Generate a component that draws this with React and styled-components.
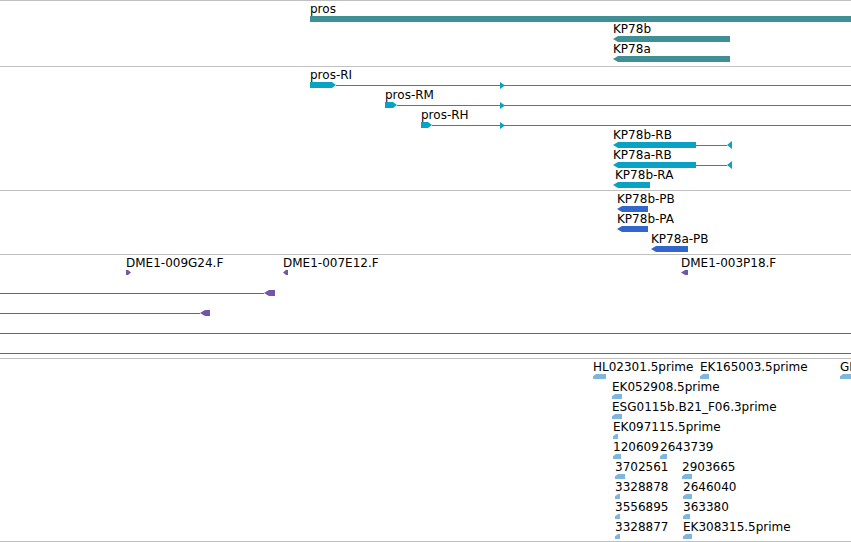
import styled, { createGlobalStyle } from "styled-components";

const GlobalStyle = createGlobalStyle`
  html, body {
    margin: 0;
    padding: 0;
    background: #ffffff;
  }
  body {
    font-family: "DejaVu Sans", Verdana, sans-serif;
  }
`;

const ROW = 20;

const COLORS = {
  gene: "#408f94",
  transcript: "#0aa2c4",
  transcriptLine: "#1a8fae",
  protein: "#3366cc",
  clone: "#7356a6",
  est: "#7fb6dd",
};

const SHAPES = {
  flat: "none",
  left: "polygon(0 50%, 5px 0, 100% 0, 100% 100%, 5px 100%)",
  right: "polygon(0 0, calc(100% - 4px) 0, 100% 50%, calc(100% - 4px) 100%, 0 100%)",
  est: "polygon(0 45%, 3px 0, 100% 0, 100% 100%, 0 100%)",
  triLeft: "polygon(0 50%, 100% 0, 100% 100%)",
  triRight: "polygon(0 0, 100% 50%, 0 100%)",
  flagLeft: "polygon(0 50%, 60% 0, 100% 0, 100% 100%, 60% 100%)",
  flagRight: "polygon(0 0, 40% 0, 100% 50%, 40% 100%, 0 100%)",
};

const Browser = styled.div`
  width: 851px;
  overflow: hidden;
  display: flex;
  flex-direction: column;
`;

const Track = styled.section`
  position: relative;
  height: ${(p) => p.$height}px;
  border-top: 1px solid #c0c0c0;
  overflow: hidden;

  &:last-child {
    border-bottom: 1px solid #c0c0c0;
  }
`;

const Feature = styled.div`
  position: absolute;
  left: ${(p) => p.$x}px;
  top: ${(p) => 1 + p.$row * ROW}px;
  display: flex;
  flex-direction: column;
  align-items: flex-start;
`;

const Label = styled.span`
  display: block;
  height: 14px;
  margin-left: ${(p) => p.$dx || 0}px;
  font-size: 12px;
  line-height: 14px;
  color: #000000;
  white-space: nowrap;
`;

const Glyph = styled.div`
  position: relative;
  display: flex;
  align-items: flex-start;
  height: 7px;
`;

const Block = styled.div`
  flex: none;
  width: ${(p) => p.$w}px;
  height: ${(p) => p.$h}px;
  background: ${(p) => p.$color};
  clip-path: ${(p) => SHAPES[p.$shape]};
`;

const Intron = styled.div`
  flex: none;
  width: ${(p) => p.$w}px;
  height: 1px;
  margin-top: 3px;
  background: ${(p) => p.$color};
`;

const Marker = styled.div`
  position: absolute;
  left: ${(p) => p.$x}px;
  top: ${(p) => p.$top}px;
  width: 5px;
  height: ${(p) => p.$h}px;
  background: ${(p) => p.$color};
  clip-path: ${(p) => SHAPES[p.$shape]};
`;

const tracks = [
  {
    id: "genes",
    height: 65,
    color: COLORS.gene,
    features: [
      { row: 0, x: 310, label: "pros", parts: [{ w: 541 }] },
      { row: 1, x: 613, label: "KP78b", parts: [{ w: 117, shape: "left" }] },
      { row: 2, x: 613, label: "KP78a", parts: [{ w: 117, shape: "left" }] },
    ],
  },
  {
    id: "transcripts",
    height: 123,
    color: COLORS.transcript,
    line: COLORS.transcriptLine,
    features: [
      {
        row: 0, x: 310, label: "pros-RI",
        parts: [{ w: 26, shape: "right" }, { w: 515, line: true }],
        markers: [{ x: 190, top: 0, h: 7, shape: "triRight" }],
      },
      {
        row: 1, x: 385, label: "pros-RM",
        parts: [{ w: 12, shape: "right" }, { w: 454, line: true }],
        markers: [{ x: 115, top: 0, h: 7, shape: "triRight" }],
      },
      {
        row: 2, x: 421, label: "pros-RH",
        parts: [{ w: 11, shape: "right" }, { w: 419, line: true }],
        markers: [{ x: 79, top: 0, h: 7, shape: "triRight" }],
      },
      {
        row: 3, x: 613, label: "KP78b-RB",
        parts: [{ w: 83, shape: "left" }, { w: 31, line: true }],
        markers: [{ x: 114, top: -1, h: 8, shape: "triLeft" }],
      },
      {
        row: 4, x: 613, label: "KP78a-RB",
        parts: [{ w: 83, shape: "left" }, { w: 31, line: true }],
        markers: [{ x: 114, top: -1, h: 8, shape: "triLeft" }],
      },
      { row: 5, x: 613, label: "KP78b-RA", dx: 2, parts: [{ w: 37, shape: "left" }] },
    ],
  },
  {
    id: "proteins",
    height: 63,
    color: COLORS.protein,
    features: [
      { row: 0, x: 617, label: "KP78b-PB", parts: [{ w: 31, shape: "left" }] },
      { row: 1, x: 617, label: "KP78b-PA", parts: [{ w: 31, shape: "left" }] },
      { row: 2, x: 651, label: "KP78a-PB", parts: [{ w: 37, shape: "left" }] },
    ],
  },
  {
    id: "clones",
    height: 103,
    color: COLORS.clone,
    features: [
      { row: 0, x: 126, label: "DME1-009G24.F", parts: [{ w: 5, h: 5, shape: "flagRight" }] },
      { row: 0, x: 283, label: "DME1-007E12.F", parts: [{ w: 5, h: 5, shape: "flagLeft" }] },
      { row: 0, x: 681, label: "DME1-003P18.F", parts: [{ w: 7, h: 5, shape: "flagLeft" }] },
      { row: 1, x: 0, parts: [{ w: 264, line: true }, { w: 11, shape: "left" }] },
      { row: 2, x: 0, parts: [{ w: 200, line: true }, { w: 10, shape: "left" }] },
      { row: 3, x: 0, parts: [{ w: 851, line: true }] },
      { row: 4, x: 0, parts: [{ w: 851, line: true }] },
    ],
  },
  {
    id: "ests",
    height: 182,
    color: COLORS.est,
    features: [
      { row: 0, x: 593, label: "HL02301.5prime", est: 13 },
      { row: 0, x: 700, label: "EK165003.5prime", est: 9 },
      { row: 0, x: 840, label: "GH01001.5prime", est: 11 },
      { row: 1, x: 612, label: "EK052908.5prime", est: 10 },
      { row: 2, x: 612, label: "ESG0115b.B21_F06.3prime", est: 10 },
      { row: 3, x: 613, label: "EK097115.5prime", est: 5 },
      { row: 4, x: 613, label: "120609", est: 8 },
      { row: 4, x: 660, label: "2643739", est: 7 },
      { row: 5, x: 615, label: "3702561", est: 10 },
      { row: 5, x: 682, label: "2903665", est: 10 },
      { row: 6, x: 615, label: "3328878", est: 5 },
      { row: 6, x: 683, label: "2646040", est: 9 },
      { row: 7, x: 615, label: "3556895", est: 5 },
      { row: 7, x: 683, label: "363380", est: 7 },
      { row: 8, x: 615, label: "3328877", est: 5 },
      { row: 8, x: 683, label: "EK308315.5prime", est: 9 },
    ],
  },
];

function partsOf(f) {
  if (f.est) return [{ w: f.est, h: 5, shape: "est" }];
  return f.parts;
}

function TrackFeature({ f, color, line }) {
  return (
    <Feature $x={f.x} $row={f.row}>
      <Label $dx={f.dx}>{f.label}</Label>
      <Glyph>
        {partsOf(f).map((p, i) =>
          p.line ? (
            <Intron key={i} $w={p.w} $color={line || color} />
          ) : (
            <Block
              key={i}
              $w={p.w}
              $h={p.h || 6}
              $shape={p.shape || "flat"}
              $color={color}
            />
          )
        )}
        {(f.markers || []).map((m, i) => (
          <Marker
            key={`m${i}`}
            $x={m.x}
            $top={m.top}
            $h={m.h}
            $shape={m.shape}
            $color={color}
          />
        ))}
      </Glyph>
    </Feature>
  );
}

export default function App() {
  return (
    <>
      <GlobalStyle />
      <Browser>
        {tracks.map((t) => (
          <Track key={t.id} $height={t.height}>
            {t.features.map((f, i) => (
              <TrackFeature key={i} f={f} color={t.color} line={t.line} />
            ))}
          </Track>
        ))}
      </Browser>
    </>
  );
}
